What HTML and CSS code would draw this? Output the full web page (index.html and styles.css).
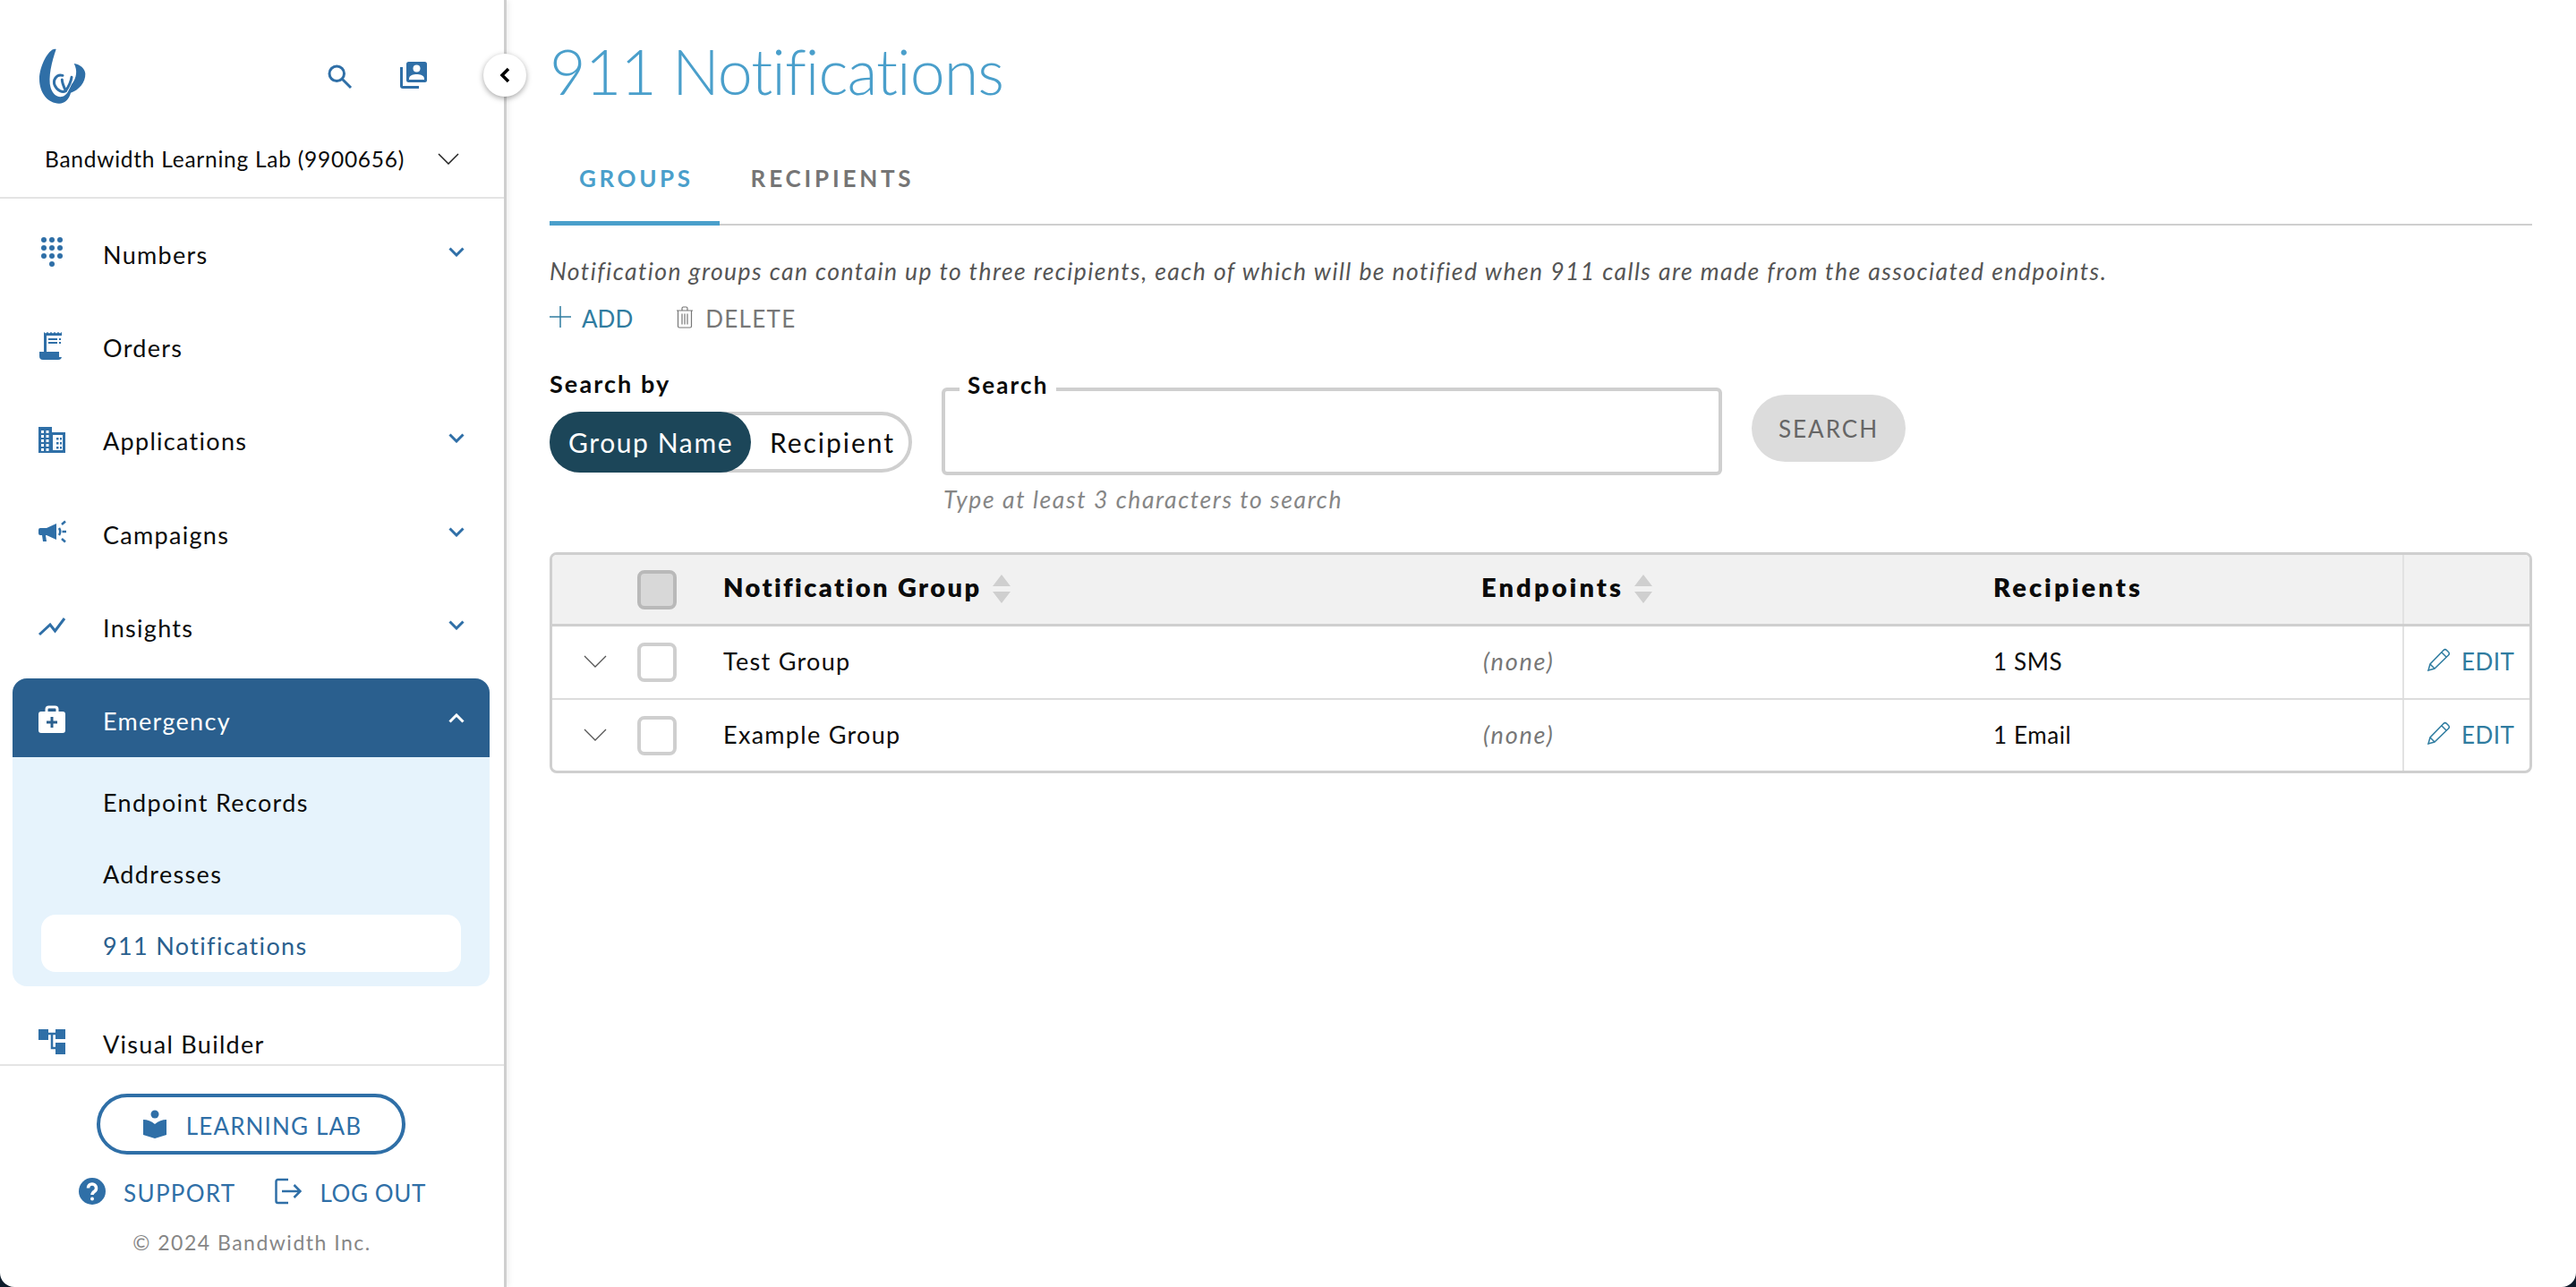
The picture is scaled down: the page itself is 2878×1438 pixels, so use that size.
FILE: index.html
```html
<!DOCTYPE html>
<html lang="en">
<head>
<meta charset="utf-8">
<title>911 Notifications</title>
<link rel="stylesheet" href="styles.css">
</head>
<body>
<div class="app">
  <aside class="sidebar">
    <header class="side-head">
      <div class="brand-row">
        <svg class="logo" viewBox="0 0 240 240" aria-hidden="true">
          <path d="M98 30C76 22 42 85 42 130C42 178 72 212 108 212C128 212 142 196 147 176C175 168 197 140 196 112C195 95 178 80 158 78C170 100 168 125 150 148C147 155 143 162 140 168C128 198 92 198 80 160C70 125 84 70 98 30Z"/>
          <path class="logo-line" d="M120 118C98 112 86 135 94 152C102 170 120 176 130 170C126 158 118 145 118 132M130 170C140 155 148 140 150 124"/>
        </svg>
        <svg class="head-icon search-icon" viewBox="0 0 24 24" aria-hidden="true">
          <circle cx="9.5" cy="9.5" r="5.5"/><path d="M13.5 13.5L20 20"/>
        </svg>
        <svg class="head-icon book-icon" viewBox="0 0 30 30" aria-hidden="true">
          <path d="M0 6h3v21h18v3H3a3 3 0 0 1-3-3z"/>
          <rect x="7" y="0" width="23" height="23" rx="2.5"/>
          <circle class="cut" cx="18.5" cy="7.5" r="4"/>
          <path class="cut" d="M10 19c0-4 5-5 8.500-5s8.500 1 8.500 5v1H10z"/>
        </svg>
      </div>
      <div class="org-row">
        <span class="org-name">Bandwidth Learning Lab (9900656)</span>
        <svg class="org-chevron" viewBox="0 0 24 13" aria-hidden="true"><path d="M1 1l11 11L23 1"/></svg>
      </div>
    </header>

    <nav class="side-nav">
      <a class="nav-row">
        <svg class="nav-icon" viewBox="0 0 32 36" aria-hidden="true"><g><circle cx="7" cy="4" r="3"/><circle cx="16" cy="4" r="3"/><circle cx="25" cy="4" r="3"/><circle cx="7" cy="13" r="3"/><circle cx="16" cy="13" r="3"/><circle cx="25" cy="13" r="3"/><circle cx="7" cy="22" r="3"/><circle cx="16" cy="22" r="3"/><circle cx="25" cy="22" r="3"/><circle cx="16" cy="31" r="3"/></g></svg>
        <span class="nav-label">Numbers</span>
        <svg class="nav-chevron" viewBox="0 0 18 11" aria-hidden="true"><path d="M1.500 1.500L9 9l7.500-7.500"/></svg>
      </a>
      <a class="nav-row">
        <svg class="nav-icon" viewBox="0 0 32 36" aria-hidden="true"><path d="M7 3l2 1.500 2-1.500 2 1.500 2-1.500 2 1.500 2-1.500 2 1.500 2-1.500 2 1.500 2-1.500v27a4 4 0 0 1-4 4H6a4 4 0 0 1-4-4v-5h5z"/><path class="cut" d="M10 7h17v24h-3v-6H10z"/><path d="M12 10h10v2H12zM24 10h2v2h-2zM12 14h10v2H12zM24 14h2v2h-2z"/></svg>
        <span class="nav-label">Orders</span>
      </a>
      <a class="nav-row">
        <svg class="nav-icon" viewBox="0 0 32 36" aria-hidden="true"><path d="M1 4h15v6h15v23H1z"/><path class="cut" d="M4 8h3v3H4zM9.500 8h3v3h-3zM4 13h3v3H4zM9.500 13h3v3h-3zM4 18h3v3H4zM9.500 18h3v3h-3zM4 23h3v3H4zM9.500 23h3v3h-3zM4 28h3v3H4zM9.500 28h3v3h-3zM17 13h11v17H17z"/><path d="M21 16h2.500v2.500H21zM25 16h2v2.500h-2zM21 21h2.500v2.500H21zM25 21h2v2.500h-2zM21 26h2.500v2.500H21zM25 26h2v2.500h-2z"/></svg>
        <span class="nav-label">Applications</span>
        <svg class="nav-chevron" viewBox="0 0 18 11" aria-hidden="true"><path d="M1.500 1.500L9 9l7.500-7.500"/></svg>
      </a>
      <a class="nav-row">
        <svg class="nav-icon" viewBox="0 0 32 36" aria-hidden="true"><path d="M1 15q0-2 2-2h7l11-5v18l-11-5h-1l1 7H6l-1-7H3q-2 0-2-2z"/><path class="icon-line" d="M24 13q2.500 4 0 8M27 9l4-3.500M27.500 17H32M27 25l4 3.500"/></svg>
        <span class="nav-label">Campaigns</span>
        <svg class="nav-chevron" viewBox="0 0 18 11" aria-hidden="true"><path d="M1.500 1.500L9 9l7.500-7.500"/></svg>
      </a>
      <a class="nav-row">
        <svg class="nav-icon" viewBox="0 0 32 36" aria-hidden="true"><path class="icon-line thick" d="M2 27l12-11 5.500 7L30 9"/></svg>
        <span class="nav-label">Insights</span>
        <svg class="nav-chevron" viewBox="0 0 18 11" aria-hidden="true"><path d="M1.500 1.500L9 9l7.500-7.500"/></svg>
      </a>
      <div class="nav-group">
        <a class="nav-row is-open">
          <svg class="nav-icon" viewBox="0 0 32 36" aria-hidden="true"><path class="case-handle" d="M10 9V6.500A2.500 2.500 0 0 1 12.500 4h7A2.500 2.500 0 0 1 22 6.500V9"/><path fill-rule="evenodd" d="M4 9h24a3 3 0 0 1 3 3v18a3 3 0 0 1-3 3H4a3 3 0 0 1-3-3V12a3 3 0 0 1 3-3zM14.500 15v4.500H10v3h4.500V27h3v-4.500H22v-3h-4.500V15z"/></svg>
          <span class="nav-label">Emergency</span>
          <svg class="nav-chevron" viewBox="0 0 18 11" aria-hidden="true"><path d="M1.500 9.500L9 2l7.500 7.500"/></svg>
        </a>
        <div class="sub-nav">
          <a class="sub-item">Endpoint Records</a>
          <a class="sub-item">Addresses</a>
          <a class="sub-item is-current">911 Notifications</a>
        </div>
      </div>
      <a class="nav-row">
        <svg class="nav-icon" viewBox="0 0 32 36" aria-hidden="true"><path d="M1 4h11v12H1zM20 4h11v11H20zM20 19h11v13H20z"/><path class="icon-line" d="M12 9h8M16 9v16h4"/></svg>
        <span class="nav-label">Visual Builder</span>
      </a>
    </nav>

    <footer class="side-foot">
      <a class="lab-button">
        <svg class="lab-icon" viewBox="0 0 28 32" aria-hidden="true"><circle cx="14" cy="5" r="4.500"/><path d="M1 11q7 0 13 5q6-5 13-5v17l-13 4-13-4z"/></svg>
        <span>LEARNING LAB</span>
      </a>
      <div class="foot-links">
        <a class="foot-link">
          <svg class="foot-icon" viewBox="0 0 30 30" aria-hidden="true"><circle cx="15" cy="15" r="15"/><path class="q-mark" d="M10.500 11.500a4.500 4.500 0 1 1 7 3.700c-1.700 1.100-2.500 2-2.500 3.800"/><circle class="cut" cx="15" cy="23.500" r="2"/></svg>
          <span>SUPPORT</span>
        </a>
        <a class="foot-link logout">
          <svg class="foot-icon logout-icon" viewBox="0 0 30 30" aria-hidden="true"><path d="M15 2H3.500A2 2 0 0 0 1.500 4v22a2 2 0 0 0 2 2H15M8 15h20M21.500 8l7 7-7 7"/></svg>
          <span>LOG OUT</span>
        </a>
      </div>
      <p class="copyright">© 2024 Bandwidth Inc.</p>
    </footer>
    <button class="collapse" type="button" aria-label="Collapse">
      <svg viewBox="0 0 12 18" aria-hidden="true"><path d="M10 2L3 9l7 7"/></svg>
    </button>
  </aside>

  <main class="content">
    <h1 class="page-title">911 Notifications</h1>
    <div class="tabs">
      <a class="tab is-active">GROUPS</a>
      <a class="tab">RECIPIENTS</a>
    </div>
    <p class="intro">Notification groups can contain up to three recipients, each of which will be notified when 911 calls are made from the associated endpoints.</p>
    <div class="actions">
      <a class="action action-add">
        <svg class="action-icon" viewBox="0 0 24 24" aria-hidden="true"><path d="M12 0v24M0 12h24"/></svg>
        <span>ADD</span>
      </a>
      <a class="action action-delete">
        <svg class="action-icon trash" viewBox="0 0 20 25" aria-hidden="true"><path d="M1 5h18M7 5V2.500A1.500 1.500 0 0 1 8.500 1h3A1.500 1.500 0 0 1 13 2.500V5M2.500 5v17.500a1.500 1.500 0 0 0 1.500 1.500h12a1.500 1.500 0 0 0 1.500-1.500V5M7 8.500v12M10 8.500v12M13 8.500v12"/></svg>
        <span>DELETE</span>
      </a>
    </div>

    <form class="search-row">
      <div class="search-by">
        <span class="search-by-label">Search by</span>
        <div class="toggle">
          <span class="toggle-opt is-on">Group Name</span>
          <span class="toggle-opt">Recipient</span>
        </div>
      </div>
      <div class="search-field">
        <fieldset class="field-box">
          <legend>Search</legend>
          <input class="field-input" type="text" aria-label="Search">
        </fieldset>
        <span class="field-hint">Type at least 3 characters to search</span>
      </div>
      <button class="search-btn" type="button">SEARCH</button>
    </form>

    <section class="table">
      <div class="tr thead">
        <div class="td"></div>
        <div class="td"><span class="check is-head"></span></div>
        <div class="td th-name">Notification Group <svg class="sort" viewBox="0 0 20 32" aria-hidden="true"><path d="M10 0l10 13H0zM10 32L0 19h20z"/></svg></div>
        <div class="td">Endpoints <svg class="sort" viewBox="0 0 20 32" aria-hidden="true"><path d="M10 0l10 13H0zM10 32L0 19h20z"/></svg></div>
        <div class="td">Recipients</div>
        <div class="td td-actions"></div>
      </div>
      <div class="tr">
        <div class="td"><svg class="row-chevron" viewBox="0 0 26 14" aria-hidden="true"><path d="M1 1l12 12L25 1"/></svg></div>
        <div class="td"><span class="check"></span></div>
        <div class="td">Test Group</div>
        <div class="td none">(none)</div>
        <div class="td count">1 SMS</div>
        <div class="td td-actions"><a class="edit"><svg class="pencil" viewBox="0 0 26 26" aria-hidden="true"><path d="M1 25l2-7L18 2.500a2.500 2.500 0 0 1 3.500 0l2 2a2.500 2.500 0 0 1 0 3.500L8 23zM3 18l5 5M16 5l5 5"/></svg><span>EDIT</span></a></div>
      </div>
      <div class="tr">
        <div class="td"><svg class="row-chevron" viewBox="0 0 26 14" aria-hidden="true"><path d="M1 1l12 12L25 1"/></svg></div>
        <div class="td"><span class="check"></span></div>
        <div class="td">Example Group</div>
        <div class="td none">(none)</div>
        <div class="td count">1 Email</div>
        <div class="td td-actions"><a class="edit"><svg class="pencil" viewBox="0 0 26 26" aria-hidden="true"><path d="M1 25l2-7L18 2.500a2.500 2.500 0 0 1 3.500 0l2 2a2.500 2.500 0 0 1 0 3.500L8 23zM3 18l5 5M16 5l5 5"/></svg><span>EDIT</span></a></div>
      </div>
    </section>
  </main>
</div>
<div class="window-mask" aria-hidden="true"></div>
</body>
</html>
```
FILE: styles.css
```css
* { box-sizing: border-box; }
html, body { margin: 0; height: 100%; background: #fff; overflow: hidden; }
body { font-family: "Lato", "Liberation Sans", sans-serif; font-size: 26px; color: #0b0b0b; font-variant-ligatures: none; }
a { color: inherit; text-decoration: none; }
p, h1 { margin: 0; }

.app { display: flex; height: 100vh; }

/* Sidebar */
.sidebar { position: relative; flex: none; width: 566px; height: 100%; display: flex; flex-direction: column; border-right: 3px solid #cfcfcf; box-shadow: 3px 0 6px rgba(0,0,0,.06); background: #fff; }
.side-head { flex: none; height: 222px; border-bottom: 2px solid #e4e4e4; }
.brand-row { display: flex; align-items: flex-start; height: 125px; padding: 45px 0 0 30px; }
.logo { width: 80px; height: 80px; fill: #2f6fa7; flex: none; }
.logo-line { fill: none; stroke: #2f6fa7; stroke-width: 9; stroke-linecap: round; }
.head-icon { flex: none; }
.search-icon { width: 36px; height: 36px; margin: 23px 0 0 252px; fill: none; stroke: #2f6fa7; stroke-width: 2; }
.book-icon { width: 30px; height: 30px; margin: 24px 0 0 49px; fill: #2f6fa7; }
.cut { fill: #fff; }
.org-row { display: flex; align-items: center; padding: 0 0 0 50px; height: 38px; margin-top: 33px; }
.org-name { font-size: 24.500px; letter-spacing: .75px; width: 439px; white-space: nowrap; }
.org-chevron { width: 24px; height: 13px; fill: none; stroke: #222; stroke-width: 1.500; }

.side-nav { flex: 1 1 0; min-height: 0; overflow: hidden; padding-top: 14px; }
.nav-row { display: flex; align-items: center; height: 88px; margin: 0 16px 16.400px 14px; padding: 0 28px 0 28px; color: #0b0b0b; }
.nav-icon { width: 32px; height: 36px; margin-top: 4px; flex: none; fill: #2f6fa7; }
.icon-line { fill: none; stroke: #2f6fa7; stroke-width: 2.500; }
.icon-line.thick { stroke-width: 3; }
.nav-label { flex: 1; margin-left: 41px; padding-top: 8px; font-size: 27px; letter-spacing: 1.300px; }
.nav-chevron { width: 18px; height: 11px; margin-top: 2px; fill: none; stroke: #2f6fa7; stroke-width: 3; }
.nav-group { margin: 0 16px 16.400px 14px; background: #e6f3fc; border-radius: 16px; }
.nav-group .nav-row { margin: 0; }
.nav-row.is-open { background: #2a5f8e; color: #fff; border-radius: 16px 16px 0 0; }
.is-open .nav-icon { fill: #fff; }
.case-handle { fill: none; stroke: #fff; stroke-width: 3; }
.is-open .nav-chevron { stroke: #fff; }
.sub-nav { display: flex; flex-direction: column; gap: 16px; padding: 16px 32px; }
.sub-item { display: flex; align-items: center; height: 64px; padding: 6px 0 0 69px; font-size: 27px; letter-spacing: 1.350px; border-radius: 16px; }
.sub-item.is-current { background: #fff; color: #2a5f8e; }

.side-foot { flex: none; height: 249px; border-top: 2px solid #e4e4e4; display: flex; flex-direction: column; align-items: center; padding: 31px 0 0 0; }
.lab-button { display: flex; align-items: center; justify-content: center; gap: 21px; width: 345px; height: 68px; margin-right: 3px; padding-left: 3px; border: 4px solid #2f6fa7; border-radius: 34px; color: #2f6fa7; font-size: 26px; letter-spacing: 1.150px; }
.lab-button span { padding-top: 3px; }
.lab-icon { width: 28px; height: 32px; fill: #2f6fa7; }
.foot-links { display: flex; gap: 44px; margin-top: 24px; margin-left: 1px; color: #2f6fa7; }
.foot-link { display: flex; align-items: center; gap: 20px; font-size: 26px; letter-spacing: 1.300px; height: 34px; }
.foot-link.logout { letter-spacing: .6px; }
.foot-link span { padding-top: 4px; }
.foot-icon { width: 30px; height: 30px; fill: #2f6fa7; }
.q-mark { fill: none; stroke: #fff; stroke-width: 3.500; }
.logout-icon { fill: none; stroke: #2f6fa7; stroke-width: 2.500; }
.copyright { margin-top: 26px; font-size: 23px; letter-spacing: 1.500px; color: #868686; }

.collapse { position: absolute; top: 60px; left: 540px; width: 48px; height: 48px; padding: 0; border: 0; border-radius: 50%; background: #fff; box-shadow: 0 2px 6px rgba(0,0,0,.35); display: flex; align-items: center; justify-content: center; }
.collapse svg { width: 12px; height: 18px; fill: none; stroke: #000; stroke-width: 3.500; }

/* Content */
.content { flex: 1; min-width: 0; padding: 0 49px 0 48px; }
.page-title { height: 160px; padding-top: 35px; font-size: 70px; line-height: 88px; font-weight: 300; letter-spacing: -.95px; color: #4a9fcb; }
.tabs { display: flex; height: 92px; border-bottom: 2px solid #cfcfcf; }
.tab { height: 92px; padding: 20px 29px 0 33px; font-size: 26px; line-height: 38px; font-weight: 700; letter-spacing: 3.600px; color: #757575; }
.tab + .tab { padding-left: 35px; letter-spacing: 3.800px; }
.tab.is-active { color: #4a9fcb; border-bottom: 5px solid #4a9fcb; }
.intro { margin-top: 31px; height: 40px; line-height: 40px; font-size: 26.500px; font-style: italic; letter-spacing: 1.440px; white-space: nowrap; color: #555; }
.actions { display: flex; gap: 48px; margin-top: 11px; height: 40px; }
.action { display: flex; align-items: center; gap: 12px; font-size: 26px; letter-spacing: 0; }
.action span { padding-top: 3px; }
.action-add { color: #2f7ca0; }
.action-delete { color: #777; letter-spacing: 1.300px; gap: 13px; }
.action-icon { width: 24px; height: 24px; fill: none; stroke: currentColor; stroke-width: 1.500; }
.trash { width: 20px; height: 25px; stroke-width: 1.200; }

.search-row { display: flex; margin-top: 36px; align-items: flex-start; height: 175px; }
.search-by { width: 405px; flex: none; }
.search-by-label { display: block; height: 50px; line-height: 38px; font-size: 27px; font-weight: 700; letter-spacing: 2.100px; }
.toggle { display: flex; align-items: stretch; height: 68px; border: 4px solid #cfcfcf; border-radius: 34px; }
.toggle-opt { display: flex; align-items: center; padding: 0 22px 0 21px; font-size: 30px; letter-spacing: 1.950px; }
.toggle-opt.is-on { background: #1c4659; color: #fff; border-radius: 34px; margin: -4px 0 -4px -4px; width: 225px; flex: none; white-space: nowrap; letter-spacing: 1.600px; }
.search-field { width: 872px; flex: none; margin-left: 33px; margin-top: 10px; display: flex; flex-direction: column; }
.field-box { margin: 0; padding: 0; height: 111px; min-width: 0; border: 4px solid #cfcfcf; border-radius: 6px; }
.field-box legend { margin-left: 16px; padding: 0 9px; height: 30px; line-height: 20px; font-size: 26px; font-weight: 700; letter-spacing: 2.100px; }
.field-input { display: block; width: 100%; height: 70px; border: 0; outline: 0; background: transparent; }
.field-hint { margin-top: 9px; height: 36px; line-height: 36px; padding-left: 2px; font-size: 26.500px; font-style: italic; letter-spacing: 1.600px; white-space: nowrap; color: #868686; }
.search-btn { flex: none; margin: 31px 0 0 33px; width: 172px; height: 75px; padding: 1px 0 0; border: 0; border-radius: 38px; background: #dcdcdc; color: #666; font: inherit; letter-spacing: 2px; }

.table { margin-top: 32px; height: 247px; border: 3px solid #cfcfcf; border-radius: 8px; overflow: hidden; }
.tr { display: grid; grid-template-columns: 95px 96px 847px 572px 457px 1fr; height: 82px; border-bottom: 2px solid #dcdcdc; }
.tr:last-child { height: 80px; border-bottom: 0; }
.td { display: flex; align-items: center; gap: 16px; padding-bottom: 3px; font-size: 27px; letter-spacing: 1.300px; }
.td:first-child { justify-content: center; }
.thead { height: 80px; background: #f1f1f1; border-bottom: 3px solid #cfcfcf; }
.thead .td { padding-bottom: 6px; font-size: 29px; font-weight: 800; letter-spacing: 3.100px; gap: 12px; }
.thead .th-name { letter-spacing: 2.400px; }
.td-actions { border-left: 2px solid #e2e2e2; padding: 0 0 3px 26px; }
.none { padding-left: 2px; font-style: italic; color: #777; letter-spacing: 1.800px; }
.count { font-size: 26px; letter-spacing: .6px; }
.check { width: 44px; height: 44px; margin-top: 2px; border: 4px solid #cfcfcf; border-radius: 8px; background: #fff; }
.check.is-head { margin-top: 6px; background: #d8d8d8; border-color: #b9b9b9; }
.sort { width: 20px; height: 32px; fill: #cfcfcf; margin-top: 4px; }
.row-chevron { width: 26px; height: 14px; margin-top: 1px; fill: none; stroke: #555; stroke-width: 1.300; }
.edit { display: flex; align-items: center; gap: 12px; font-size: 26px; letter-spacing: .5px; color: #2f7ca0; }
.pencil { width: 26px; height: 26px; margin-top: -3px; fill: none; stroke: currentColor; stroke-width: 1.500; }

.window-mask { position: fixed; inset: 0 0 0 0; border-radius: 0 0 16px 16px; box-shadow: 0 0 0 24px #0e1c2b; pointer-events: none; }
```
